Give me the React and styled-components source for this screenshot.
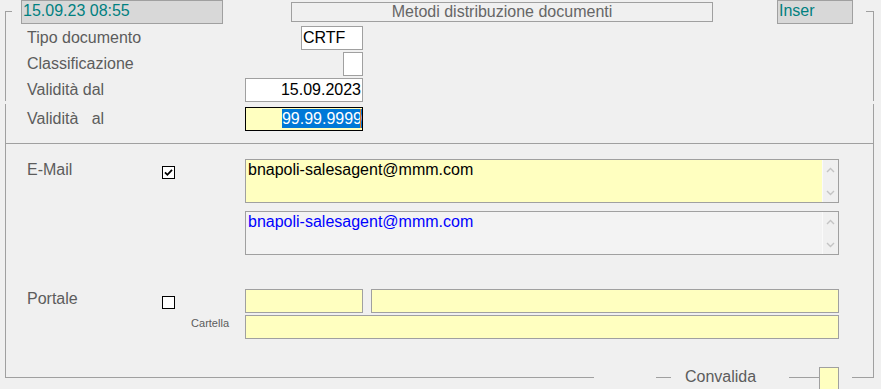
import React from 'react';
import styled, { createGlobalStyle } from 'styled-components';

const GlobalStyle = createGlobalStyle`
  html, body {
    margin: 0;
    padding: 0;
    background: #f0f0f0;
  }
  body {
    font-family: "Liberation Sans", Arial, sans-serif;
    font-size: 16px;
  }
`;

const Page = styled.div`
  width: 881px;
  height: 389px;
  overflow: hidden;
  background: #f0f0f0;
  display: flex;
  flex-direction: column;
`;

const Group = styled.div`
  box-sizing: border-box;
  width: 869px;
  height: ${p => p.$h}px;
  margin: ${p => p.$mt}px 0 0 5px;
  border-left: 1px solid #a0a0a0;
  border-right: 1px solid #a0a0a0;
  display: flex;
  flex-direction: column;
  flex-shrink: 0;
`;

const Header = styled.div`
  display: flex;
  align-items: flex-start;
  height: 24px;
  margin-top: -11px;
  flex-shrink: 0;
`;

const Tick = styled.div`
  width: ${p => p.$w}px;
  height: 1px;
  background: #a0a0a0;
  margin-top: ${p => p.$mt ?? 11}px;
  margin-left: ${p => p.$ml || 0}px;
  flex-shrink: 0;
`;

const Spacer = styled.div`
  flex: 1;
`;

const StatusBox = styled.div`
  box-sizing: border-box;
  width: ${p => p.$w}px;
  height: 24px;
  margin-left: ${p => p.$ml}px;
  background: #d8d8d8;
  border: 1px solid #a0a0a0;
  color: #008080;
  line-height: 20px;
  padding-left: 1px;
  white-space: nowrap;
`;

const TitleBox = styled.div`
  box-sizing: border-box;
  width: 422px;
  height: 20px;
  margin: 2px 0 0 68px;
  border: 1px solid #a0a0a0;
  color: #666;
  text-align: center;
  line-height: 17px;
  white-space: nowrap;
`;

const FormRow = styled.div`
  display: flex;
  align-items: center;
  height: 24px;
  margin-top: ${p => p.$mt}px;
  padding-left: 21px;
  flex-shrink: 0;
`;

const Label = styled.div`
  width: ${p => p.$w || 218}px;
  color: #5c5c5c;
  line-height: 18px;
  white-space: pre;
  padding-top: ${p => p.$pt || 0}px;
`;

const FieldSlot = styled.div`
  width: 118px;
  display: flex;
  justify-content: flex-end;
`;

const Field = styled.div`
  box-sizing: border-box;
  width: ${p => p.$w}px;
  height: 24px;
  border: 1px solid ${p => (p.$focus ? '#000' : '#a0a0a0')};
  background: ${p => p.$bg || '#fff'};
  color: #000;
  line-height: 22px;
  padding: 0 1px;
  text-align: ${p => p.$align || 'left'};
  white-space: nowrap;
  overflow: hidden;
  flex-shrink: 0;
`;

const Selected = styled.span`
  background: #0078d7;
  color: #fff;
  display: inline-block;
  line-height: 19px;
`;

const Caret = styled.span`
  display: inline-block;
  width: 1px;
  height: 19px;
  margin-left: -2px;
  vertical-align: top;
  margin-top: 1px;
  background: #e07a2a;
`;

const Separator = styled.div`
  height: 1px;
  background: #a0a0a0;
  margin-top: 12px;
  flex-shrink: 0;
`;

const Section = styled.div`
  display: grid;
  grid-template-columns: 135px 83px 594px;
  row-gap: ${p => p.$rowGap || 0}px;
  padding-left: 21px;
  margin-top: ${p => p.$mt}px;
  flex-shrink: 0;
`;

const CheckCell = styled.div`
  padding-top: 6px;
`;

const Stack = styled.div`
  display: flex;
  flex-direction: column;
  gap: ${p => p.$gap}px;
`;

const FieldRow = styled.div`
  display: flex;
  gap: 8px;
`;

const SmallLabel = styled.div`
  font-size: 11px;
  line-height: 16px;
  color: #5c5c5c;
  text-align: right;
  padding-right: 16px;
`;

const Memo = styled.div`
  box-sizing: border-box;
  width: 594px;
  height: 44px;
  border: 1px solid #a0a0a0;
  background: ${p => p.$bg};
  display: flex;
`;

const MemoText = styled.div`
  flex: 1;
  padding: 1px 2px;
  line-height: 18px;
  color: ${p => p.$color};
`;

const ScrollBar = styled.div`
  width: 16px;
  background: #f0f0f0;
  border-left: 1px solid #fafafa;
  display: flex;
  flex-direction: column;
  align-items: center;
  justify-content: space-between;
  padding: 7px 0 6px;
  box-sizing: border-box;
`;

const Footer = styled.div`
  display: flex;
  align-items: flex-start;
  width: 869px;
  height: 24px;
  margin: -10px 0 0 5px;
  flex-shrink: 0;
`;

const Legend = styled.div`
  margin-left: 14px;
  color: #5c5c5c;
  line-height: 18px;
  margin-top: 1px;
  width: 75px;
`;

const SmallBox = styled.div`
  box-sizing: border-box;
  width: 20px;
  height: 24px;
  border: 1px solid #a0a0a0;
  background: #ffffc0;
  flex-shrink: 0;
`;

const Chevron = ({ down }) => (
  <svg width="9" height="6" viewBox="0 0 9 6">
    <path
      d={down ? 'M1 1 L4.5 4.5 L8 1' : 'M1 5 L4.5 1.5 L8 5'}
      fill="none"
      stroke="#c4c4c4"
      strokeWidth="1.4"
    />
  </svg>
);

const CheckBox = ({ checked }) => (
  <svg width="13" height="13" viewBox="0 0 13 13">
    <rect x="0.5" y="0.5" width="12" height="12" fill="#fff" stroke="#000" />
    {checked && (
      <path d="M3 6.3 L5.4 8.8 L10 3.8" fill="none" stroke="#000" strokeWidth="1.8" />
    )}
  </svg>
);

const YELLOW = '#ffffc0';

export default function App() {
  return (
    <>
      <GlobalStyle />
      <Page>
        <Group $mt={11} $h={90}>
          <Header>
            <Tick $w={6} />
            <StatusBox $w={202} $ml={9}>15.09.23 08:55</StatusBox>
            <TitleBox>Metodi distribuzione documenti</TitleBox>
            <StatusBox $w={76} $ml={64}>Inser</StatusBox>
            <Spacer />
            <Tick $w={7} />
          </Header>
          <FormRow $mt={2}>
            <Label>Tipo documento</Label>
            <FieldSlot>
              <Field $w={62}>CRTF</Field>
            </FieldSlot>
          </FormRow>
          <FormRow $mt={2}>
            <Label>Classificazione</Label>
            <FieldSlot>
              <Field $w={20} />
            </FieldSlot>
          </FormRow>
          <FormRow $mt={2}>
            <Label>Validità dal</Label>
            <FieldSlot>
              <Field $w={118} $align="right">15.09.2023</Field>
            </FieldSlot>
          </FormRow>
        </Group>

        <Group $mt={3} $h={273}>
          <FormRow $mt={3}>
            <Label>{'Validità   al'}</Label>
            <FieldSlot>
              <Field $w={118} $align="right" $bg={YELLOW} $focus>
                <Selected>99.99.9999</Selected>
                <Caret />
              </Field>
            </FieldSlot>
          </FormRow>
          <Separator />

          <Section $mt={15}>
            <Label $w={135} $pt={2}>E-Mail</Label>
            <CheckCell>
              <CheckBox checked />
            </CheckCell>
            <Stack $gap={8}>
              <Memo $bg={YELLOW}>
                <MemoText $color="#000">bnapoli-salesagent@mmm.com</MemoText>
                <ScrollBar>
                  <Chevron />
                  <Chevron down />
                </ScrollBar>
              </Memo>
              <Memo $bg="#f3f3f3">
                <MemoText $color="#0000ff">bnapoli-salesagent@mmm.com</MemoText>
                <ScrollBar>
                  <Chevron />
                  <Chevron down />
                </ScrollBar>
              </Memo>
            </Stack>
          </Section>

          <Section $mt={34} $rowGap={2}>
            <Label $w={135} $pt={1}>Portale</Label>
            <CheckCell>
              <CheckBox />
            </CheckCell>
            <FieldRow>
              <Field $w={118} $bg={YELLOW} />
              <Field $w={468} $bg={YELLOW} />
            </FieldRow>
            <div />
            <SmallLabel>Cartella</SmallLabel>
            <Field $w={594} $bg={YELLOW} />
          </Section>
        </Group>

        <Footer>
          <Tick $w={589} $mt={10} />
          <Tick $w={15} $mt={10} $ml={62} />
          <Legend>Convalida</Legend>
          <Tick $w={30} $mt={10} $ml={29} />
          <SmallBox />
          <Tick $w={22} $mt={10} $ml={13} />
        </Footer>
      </Page>
    </>
  );
}
